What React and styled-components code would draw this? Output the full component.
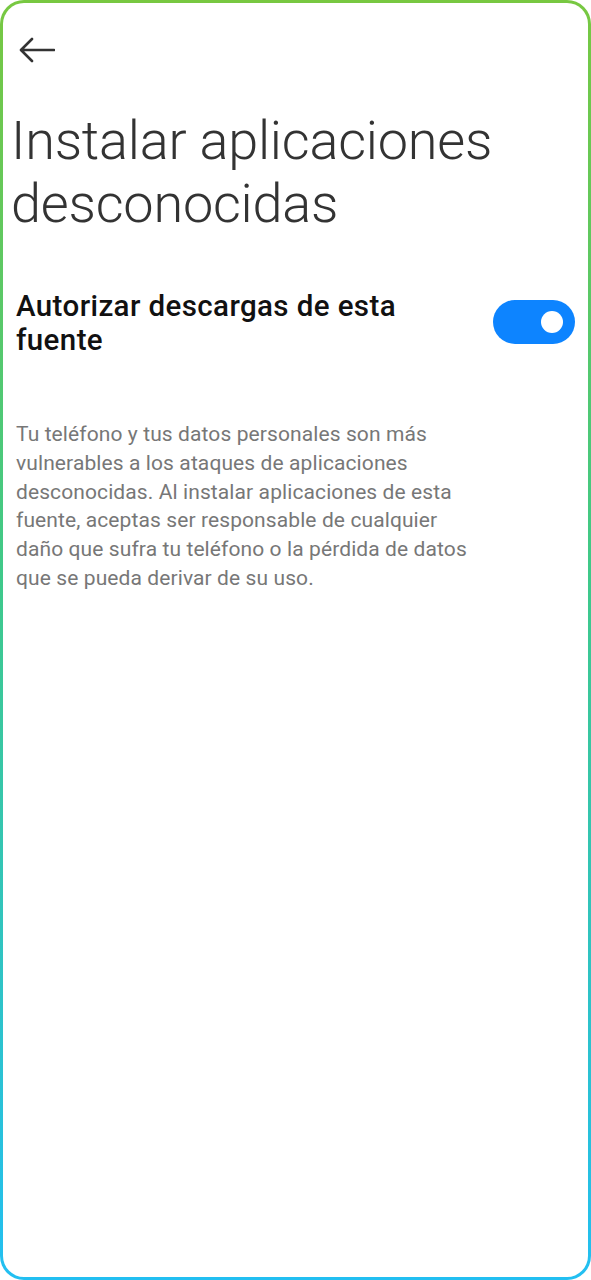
import React from 'react';
import styled, { createGlobalStyle } from 'styled-components';

const GlobalStyle = createGlobalStyle`
    html, body {
        margin: 0;
        padding: 0;
        background: #ffffff;
    }
    * {
        box-sizing: border-box;
    }
`;

const Frame = styled.div`
    width: 591px;
    height: 1280px;
    padding: 3px;
    border-radius: 24px;
    background: linear-gradient(180deg, #78c841 0%, #3fc98a 45%, #22bff2 100%);
`;

const Screen = styled.div`
    height: 100%;
    border-radius: 21px;
    background: #ffffff;
    padding: 0 13px 0 10px;
    font-family: Roboto, "Noto Sans", sans-serif;
    display: flex;
    flex-direction: column;
`;

const TopBar = styled.div`
    height: 90px;
    display: flex;
    align-items: flex-start;
    padding-top: 32px;
`;

const BackButton = styled.button`
    border: 0;
    background: none;
    padding: 0 0 0 6px;
    width: 48px;
    height: 30px;
    display: flex;
    align-items: center;
    cursor: pointer;
`;

const Title = styled.h1`
    margin: 0 0 0 -2px;
    padding-top: 16px;
    font-size: 54px;
    line-height: 63px;
    font-weight: 300;
    color: #333333;
    letter-spacing: -0.2px;
`;

const SettingRow = styled.div`
    display: flex;
    align-items: flex-start;
    justify-content: space-between;
    margin-top: 54px;
    padding-left: 3px;
`;

const SettingLabel = styled.div`
    font-size: 29.5px;
    line-height: 34px;
    font-weight: 500;
    letter-spacing: 0.4px;
    color: #111111;
    max-width: 410px;
`;

const Toggle = styled.div`
    width: 82px;
    height: 44px;
    border-radius: 22px;
    background: ${({ on }) => (on ? '#0d84ff' : '#c9c9c9')};
    display: flex;
    align-items: center;
    justify-content: ${({ on }) => (on ? 'flex-end' : 'flex-start')};
    padding: 0 12px;
    margin-top: 11px;
    flex-shrink: 0;
`;

const Knob = styled.div`
    width: 22px;
    height: 22px;
    border-radius: 50%;
    background: #ffffff;
`;

const Description = styled.p`
    margin: 63px 0 0;
    padding-left: 3px;
    font-size: 21px;
    line-height: 28.8px;
    font-weight: 400;
    letter-spacing: 0.1px;
    color: #777777;
    max-width: 468px;
`;

function ArrowLeft() {
    return (
        <svg width="36" height="26" viewBox="0 0 36 26" fill="none">
            <path d="M35 13H2.5M13 2L2 13l11 11" stroke="#333333" strokeWidth="2.6" strokeLinecap="round" strokeLinejoin="round" />
        </svg>
    );
}

export default function App() {
    return (
        <>
            <GlobalStyle />
            <Frame>
                <Screen>
                    <TopBar>
                        <BackButton aria-label="Atrás">
                            <ArrowLeft />
                        </BackButton>
                    </TopBar>
                    <Title>Instalar aplicaciones desconocidas</Title>
                    <SettingRow>
                        <SettingLabel>Autorizar descargas de esta fuente</SettingLabel>
                        <Toggle on>
                            <Knob />
                        </Toggle>
                    </SettingRow>
                    <Description>
                        Tu teléfono y tus datos personales son más vulnerables a los ataques de aplicaciones desconocidas. Al instalar aplicaciones de esta fuente, aceptas ser responsable de cualquier daño que sufra tu teléfono o la pérdida de datos que se pueda derivar de su uso.
                    </Description>
                </Screen>
            </Frame>
        </>
    );
}
